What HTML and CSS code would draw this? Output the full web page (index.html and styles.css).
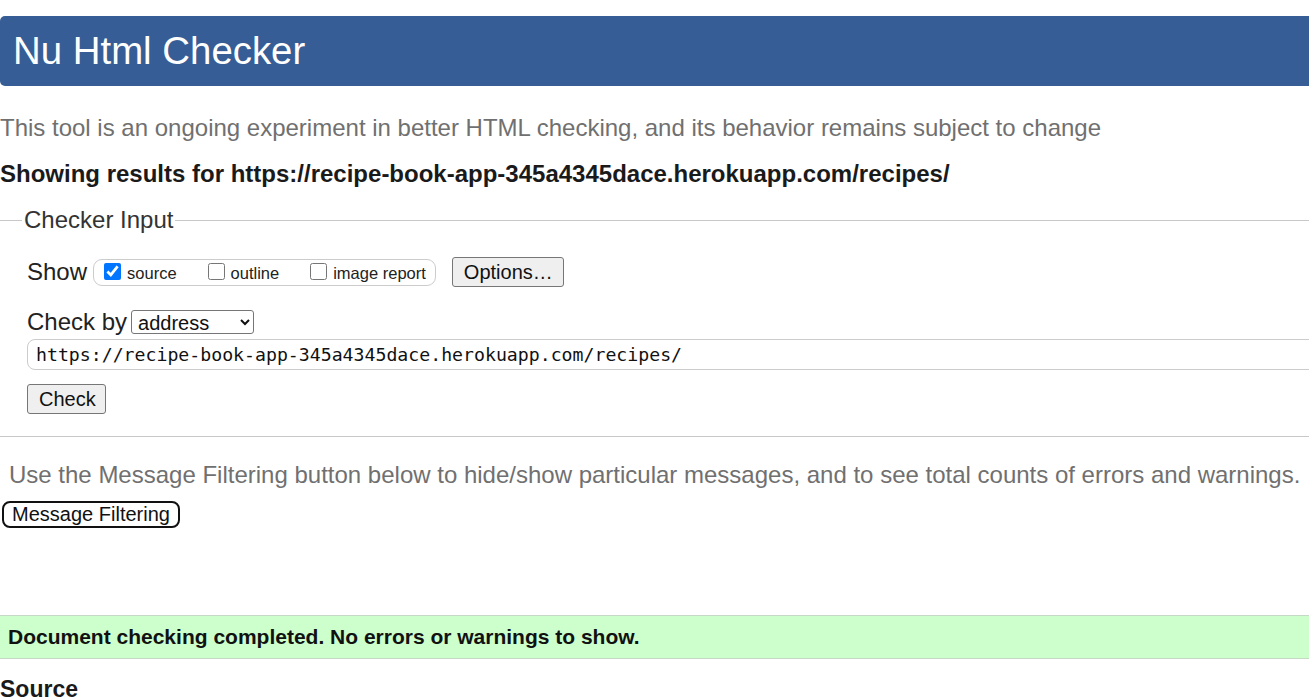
FILE: index.html
```html
<!DOCTYPE html>
<html lang="en">
<head>
<meta charset="utf-8">
<title>Showing results for https://recipe-book-app-345a4345dace.herokuapp.com/recipes/ - Nu Html Checker</title>
<link rel="stylesheet" href="styles.css">
</head>
<body>
<h1 class="header">Nu Html Checker</h1>
<p class="intro">This tool is an ongoing experiment in better HTML checking, and its behavior remains subject to change</p>
<p class="showing">Showing results for https://recipe-book-app-345a4345dace.herokuapp.com/recipes/</p>
<fieldset class="checker">
  <legend class="legend">Checker Input</legend>
  <div class="row show-row">
    <span class="row-label">Show</span>
    <span class="show-box">
      <label class="opt"><input type="checkbox" class="cb" checked>source</label>
      <label class="opt"><input type="checkbox" class="cb">outline</label>
      <label class="opt last"><input type="checkbox" class="cb">image report</label>
    </span>
    <button class="btn options-btn" type="button">Options…</button>
  </div>
  <div class="row by-row">
    <span class="row-label">Check by</span>
    <select class="sel"><option>address</option><option>file upload</option><option>text input</option></select>
  </div>
  <input class="url" type="url" value="https://recipe-book-app-345a4345dace.herokuapp.com/recipes/">
  <button class="btn check-btn" type="submit">Check</button>
</fieldset>
<p class="filter-note">Use the Message Filtering button below to hide/show particular messages, and to see total counts of errors and warnings.</p>
<button class="filter-btn" type="button">Message Filtering</button>
<p class="success">Document checking completed. No errors or warnings to show.</p>
<h2 class="source">Source</h2>
</body>
</html>
```
FILE: styles.css
```css
html, body {
  margin: 0;
  padding: 0;
  background: #fff;
}
body {
  font-family: "Liberation Sans", Arial, sans-serif;
  color: #1a1a1a;
  overflow: hidden;
}
.header {
  margin: 16px -20px 0 0;
  height: 70px;
  line-height: 70px;
  padding-left: 13px;
  background: #365d95;
  color: #fff;
  font-size: 38.4px;
  font-weight: normal;
  border-radius: 5px 0 0 5px;
}
.intro {
  margin: 29px 0 0;
  font-size: 24px;
  line-height: 26px;
  color: #707070;
  white-space: nowrap;
}
.showing {
  margin: 20px 0 0;
  font-size: 24px;
  line-height: 26px;
  font-weight: bold;
  white-space: nowrap;
}
.checker {
  margin: 20px -30px 0 -2px;
  padding: 24px 0 22px 29px;
  border: none;
  border-top: 1px solid #c8c8c8;
  border-bottom: 1px solid #c8c8c8;
  min-width: 0;
}
.legend {
  margin-left: -5px;
  padding: 0 2px;
  font-size: 24px;
  line-height: 26px;
  color: #333;
}
.row {
  display: flex;
  align-items: center;
}
.row-label {
  font-size: 24px;
  line-height: 26px;
  color: #222;
}
.show-row {
  height: 30px;
}
.show-box {
  display: flex;
  align-items: baseline;
  margin-left: 6px;
  height: 25px;
  padding: 0 9px 0 10px;
  border: 1px solid #ccc;
  border-radius: 9px;
  font-size: 16.5px;
  line-height: 27px;
  color: #222;
}
.opt {
  display: flex;
  align-items: baseline;
  margin-right: 31px;
}
.opt.last {
  margin-right: 0;
}
.cb {
  width: 17px;
  height: 17px;
  margin: 0 6px 0 0;
  position: relative;
  top: 1px;
}
.btn {
  box-sizing: border-box;
  font-family: "Liberation Sans", Arial, sans-serif;
  font-size: 20px;
  color: #111;
  background: #efefef;
  border: 1px solid #767676;
  border-radius: 3px;
  height: 30px;
  padding: 0 11px;
}
.options-btn {
  margin-left: 16px;
  width: 112px;
}
.by-row {
  margin-top: 22px;
}
.sel {
  box-sizing: border-box;
  margin-left: 4px;
  width: 123px;
  height: 24px;
  font-family: "Liberation Sans", Arial, sans-serif;
  font-size: 20px;
  color: #111;
  border: 1px solid #767676;
  border-radius: 3px;
  background: #fff;
  padding: 0 2px;
}
.url {
  display: block;
  box-sizing: border-box;
  width: 100%;
  height: 31px;
  margin: 4px 0 0;
  padding: 0 8px;
  border: 1px solid #ccc;
  border-radius: 8px;
  font-family: "DejaVu Sans Mono", "Liberation Mono", monospace;
  font-size: 18.2px;
  color: #111;
  background: #fff;
}
.check-btn {
  display: block;
  margin-top: 14px;
  width: 79px;
}
.filter-note {
  margin: 25px 0 0;
  padding-left: 9px;
  font-size: 24px;
  line-height: 26px;
  color: #707070;
  white-space: nowrap;
}
.filter-btn {
  display: block;
  box-sizing: border-box;
  margin: 13px 0 0 2px;
  width: 178px;
  height: 27px;
  padding: 0;
  font-family: "Liberation Sans", Arial, sans-serif;
  font-size: 20px;
  color: #111;
  background: #fff;
  border: 2px solid #111;
  border-radius: 8px;
}
.success {
  margin: 87px -20px 0 0;
  height: 42px;
  line-height: 42px;
  padding-left: 8px;
  background: #ccffcc;
  border-top: 1px solid #c6d8c6;
  border-bottom: 1px solid #c6d8c6;
  font-size: 21px;
  font-weight: bold;
  color: #111;
  white-space: nowrap;
}
.source {
  margin: 18px 0 0;
  font-size: 23px;
  line-height: 24px;
  font-weight: bold;
  color: #1a1a1a;
}
```
